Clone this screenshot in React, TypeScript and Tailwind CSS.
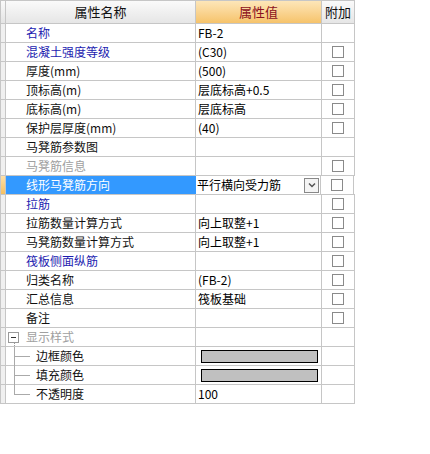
import React from 'react';

type Row = {
  name: string;
  value?: string;
  tone?: 'blue' | 'gray' | 'normal';
  check?: boolean;
  selected?: boolean;
  kind?: 'group' | 'child' | 'lastChild';
  swatch?: boolean;
};

const rows: Row[] = [
  { name: '名称', value: 'FB-2', tone: 'blue' },
  { name: '混凝土强度等级', value: '(C30)', tone: 'blue', check: true },
  { name: '厚度(mm)', value: '(500)', check: true },
  { name: '顶标高(m)', value: '层底标高+0.5', check: true },
  { name: '底标高(m)', value: '层底标高', check: true },
  { name: '保护层厚度(mm)', value: '(40)', check: true },
  { name: '马凳筋参数图' },
  { name: '马凳筋信息', tone: 'gray', check: true },
  { name: '线形马凳筋方向', value: '平行横向受力筋', check: true, selected: true },
  { name: '拉筋', tone: 'blue', check: true },
  { name: '拉筋数量计算方式', value: '向上取整+1', check: true },
  { name: '马凳筋数量计算方式', value: '向上取整+1', check: true },
  { name: '筏板侧面纵筋', tone: 'blue', check: true },
  { name: '归类名称', value: '(FB-2)', check: true },
  { name: '汇总信息', value: '筏板基础', check: true },
  { name: '备注', check: true },
  { name: '显示样式', tone: 'gray', kind: 'group' },
  { name: '边框颜色', kind: 'child', swatch: true },
  { name: '填充颜色', kind: 'child', swatch: true },
  { name: '不透明度', value: '100', kind: 'lastChild' },
];

const font = { fontFamily: '"Noto Sans CJK SC", "Noto Sans", sans-serif' };

function Checkbox() {
  return <div className="w-[12px] h-[12px] border border-[#8a8a8a] bg-white" />;
}

function NameCell({ row }: { row: Row }) {
  const color = row.selected
    ? 'text-white'
    : row.tone === 'blue'
      ? 'text-[#1c1cb0]'
      : row.tone === 'gray'
        ? 'text-[#a0a0a0]'
        : 'text-[#111]';
  const bg = row.selected ? 'bg-[#3399ff]' : 'bg-white';

  if (row.kind === 'group') {
    return (
      <div className={`relative w-[190px] h-full border-r border-[#c6c6c6] ${bg} flex items-center`}>
        <div className="absolute left-[2px] top-[4px] w-[11px] h-[11px] border border-[#9a9a9a] bg-white flex items-center justify-center">
          <div className="w-[5px] h-px bg-[#333]" />
        </div>
        <div className="absolute left-[8px] top-[15px] h-[5px] w-px border-l border-dotted border-[#999]" />
        <span className={`pl-[20px] text-[12px] leading-[18px] ${color}`}>{row.name}</span>
      </div>
    );
  }
  if (row.kind === 'child' || row.kind === 'lastChild') {
    return (
      <div className={`relative w-[190px] h-full border-r border-[#c6c6c6] ${bg} flex items-center`}>
        <div
          className={`absolute left-[8px] top-0 w-px border-l border-[#aaa] ${row.kind === 'lastChild' ? 'h-[10px]' : 'h-[19px]'}`}
        />
        <div className="absolute left-[8px] top-[9px] w-[16px] h-px bg-[#aaa]" />
        <span className={`pl-[30px] text-[12px] leading-[18px] ${color}`}>{row.name}</span>
      </div>
    );
  }
  return (
    <div className={`w-[190px] h-full border-r border-[#c6c6c6] ${bg} flex items-center`}>
      <span className={`pl-[20px] text-[12px] leading-[18px] ${color}`}>{row.name}</span>
    </div>
  );
}

function ValueCell({ row }: { row: Row }) {
  if (row.swatch) {
    return (
      <div className="w-[126px] h-full border-r border-[#c6c6c6] flex items-center pl-[5px]">
        <div className="w-[117px] h-[13px] border border-black bg-[#c0c0c0]" />
      </div>
    );
  }
  if (row.selected) {
    return (
      <div className="w-[126px] h-full border-r border-[#c6c6c6] border-l border-l-[#3399ff] -ml-px flex items-center justify-between pl-[1px] pr-[1px]">
        <span className="text-[12px] leading-[18px] text-black">{row.value}</span>
        <div className="w-[15px] h-[15px] border border-[#888] bg-[#f4f4f4] flex items-center justify-center">
          <svg width="8" height="6" viewBox="0 0 8 6">
            <path d="M1 1.5 L4 4.5 L7 1.5" stroke="#555" strokeWidth="1.5" fill="none" />
          </svg>
        </div>
      </div>
    );
  }
  return (
    <div className="w-[126px] h-full border-r border-[#c6c6c6] flex items-center pl-[2px]">
      <span className="text-[12px] leading-[18px] text-black whitespace-nowrap">{row.value}</span>
    </div>
  );
}

export default function App() {
  return (
    <div className="w-[430px] h-[454px] bg-white" style={font}>
      <div className="w-[355px] border-t border-[#c6c6c6]">
        <div className="flex h-[23px] border-b border-[#c6c6c6]">
          <div className="w-[6px] h-full border-r border-l border-[#c6c6c6] bg-gradient-to-b from-[#fafafa] to-[#e4e4e4]" />
          <div className="w-[190px] h-full border-r border-[#c6c6c6] bg-gradient-to-b from-[#fafafa] to-[#e6e6e6] flex items-center justify-center text-[13px] text-[#111]">
            属性名称
          </div>
          <div className="w-[126px] h-full border-r border-[#c6c6c6] bg-gradient-to-b from-[#fde6b8] to-[#f6c36a] flex items-center justify-center text-[13px] text-[#8b1020]">
            属性值
          </div>
          <div className="w-[33px] h-full border-r border-[#c6c6c6] bg-gradient-to-b from-[#fafafa] to-[#e6e6e6] flex items-center justify-center text-[13px] text-[#111]">
            附加
          </div>
        </div>
        {rows.map((row, i) => (
          <div key={i} className="flex h-[19px] border-b border-[#c6c6c6]">
            <div
              className={`w-[6px] h-full border-r border-l border-[#c6c6c6] ${row.selected ? 'bg-gradient-to-b from-[#fde0a8] to-[#f5c060]' : 'bg-[#f0f0f0]'}`}
            />
            <NameCell row={row} />
            <ValueCell row={row} />
            <div className="w-[33px] h-full border-r border-[#c6c6c6] flex items-center justify-center">
              {row.check && <Checkbox />}
            </div>
          </div>
        ))}
      </div>
    </div>
  );
}
